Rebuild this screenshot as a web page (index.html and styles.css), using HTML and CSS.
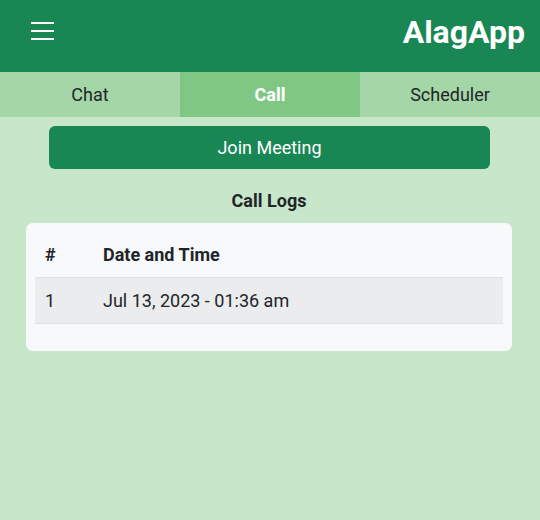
FILE: index.html
```html
<!DOCTYPE html>
<html lang="en">
<head>
<meta charset="utf-8">
<title>AlagApp</title>
<link rel="stylesheet" href="styles.css">
</head>
<body>
<header class="topbar">
  <button class="menu-btn" aria-label="Menu">
    <svg class="menu-icon" viewBox="0 0 24 20" width="24" height="20" aria-hidden="true">
      <path d="M1 2H24M1 10H24M1 18H24" stroke="#fff" stroke-width="2" fill="none"/>
    </svg>
  </button>
  <h1 class="brand">AlagApp</h1>
</header>
<nav class="tabs">
  <a class="tab">Chat</a>
  <a class="tab tab-active">Call</a>
  <a class="tab">Scheduler</a>
</nav>
<main class="content">
  <button class="join-btn">Join Meeting</button>
  <h2 class="section-title">Call Logs</h2>
  <div class="card">
    <table class="logs">
      <thead>
        <tr><th class="col-num">#</th><th>Date and Time</th></tr>
      </thead>
      <tbody>
        <tr class="striped"><td class="col-num">1</td><td>Jul 13, 2023 - 01:36 am</td></tr>
      </tbody>
    </table>
  </div>
</main>
</body>
</html>
```
FILE: styles.css
```css
* { box-sizing: border-box; }
html, body { height: 100%; }
body {
  margin: 0;
  background: #c8e6c9;
  font-family: Roboto, "Noto Sans", sans-serif;
  font-size: 18px;
  color: #212529;
}
.topbar {
  height: 72px;
  background: #198754;
  display: flex;
  justify-content: space-between;
  align-items: flex-start;
  padding: 13px 15px 0 30px;
}
.menu-btn {
  margin: 8px 0 0 0;
  padding: 0;
  border: 0;
  background: none;
  display: flex;
}
.menu-icon { display: block; }
.brand {
  margin: 0;
  font-size: 32px;
  font-weight: 700;
  line-height: 38px;
  color: #fff;
}
.tabs {
  display: grid;
  grid-template-columns: 1fr 1fr 1fr;
  height: 45px;
  background: #a5d6a7;
}
.tab {
  text-align: center;
  line-height: 45px;
  color: #212529;
  font-size: 18px;
}
.tab-active {
  background: #81c784;
  color: #fff;
  font-weight: 700;
}
.content {
  padding: 9px 28px 0 26px;
}
.join-btn {
  display: block;
  width: 441px;
  height: 43px;
  margin: 0 0 0 23px;
  border: 0;
  border-radius: 6px;
  background: #198754;
  color: #fff;
  font-family: inherit;
  font-size: 18px;
  line-height: 43px;
  padding: 0;
}
.section-title {
  margin: 18px 0 9px;
  text-align: center;
  font-size: 18px;
  font-weight: 700;
  line-height: 27px;
}
.card {
  background: #f8f9fa;
  border-radius: 7px;
  padding: 9px 9px 9px;
}
.logs {
  width: 100%;
  border-collapse: collapse;
  margin-bottom: 18px;
}
.logs th, .logs td {
  text-align: left;
  padding: 1px 10px 0;
  line-height: 44px;
  border-bottom: 1px solid #dee2e6;
}
.logs th { font-weight: 700; height: 45px; }
.logs td { height: 46px; }
.logs .col-num { width: 58px; }
.striped td { background: #ebeced; }
```
